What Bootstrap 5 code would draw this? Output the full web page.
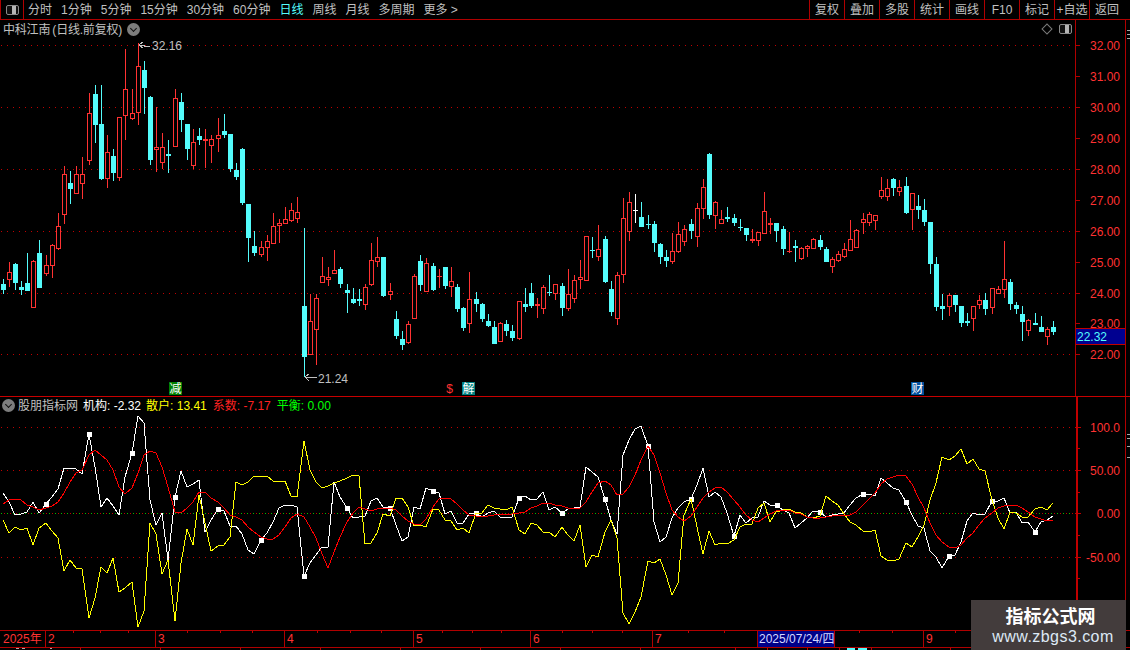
<!DOCTYPE html>
<html lang="zh">
<head>
<meta charset="utf-8">
<title>中科江南 日线</title>
<link href="https://cdn.jsdelivr.net/npm/bootstrap@5.3.0/dist/css/bootstrap.min.css" rel="stylesheet">
<style>
html,body{height:650px;overflow:hidden;background:#000}
body{font:12px/1 "Liberation Sans","Noto Sans CJK SC",sans-serif;color:#c0c0c0}
svg{display:block;shape-rendering:crispEdges}
svg text{font:12px "Liberation Sans","Noto Sans CJK SC",sans-serif;dominant-baseline:central;shape-rendering:auto}
svg polyline{stroke-width:1;fill:none}
.term{width:1130px;height:650px}
.toolbar{height:20px;border-bottom:1px solid #b00000}
.toggle-box{width:24px;height:19px;border-left:1px solid #b00000;border-right:1px solid #b00000}
.panel-glyph{width:13px;height:10px;border:1px solid #8a8a8a;border-radius:2px;background:linear-gradient(90deg,#111 0 50%,#b5b5b5 50% 85%,#111 85%)}
.periods{gap:9px;margin-left:4px}
.periods a,.tool-btn{color:#c0c0c0;text-decoration:none;white-space:nowrap}
.periods a.on{color:#54fcfc}
.tool-btn{width:35px;height:19px;border-left:1px solid #b00000;font-size:12px}
.tool-end{margin-right:6px}
.pane-a{height:377px;border-bottom:1px solid #c80000}
.pane-b{height:233px}
.title-a{left:3px;top:3px;gap:5px;letter-spacing:-.2px;word-spacing:-1px}
.title-b{left:2px;top:2px}
.title-b span+span{margin-left:6px}
.title-b span.lab{margin-left:3px}
.title-b span.val-w,.title-b span.val-y{margin-left:5px}
.circle-btn{width:13px;height:13px;border-radius:50%;background:#7d7d7d}
.circle-btn::after{content:"";width:5px;height:5px;margin-top:-3px;border-right:1px solid #111;border-bottom:1px solid #111;transform:rotate(45deg)}
.val-w{color:#fff}.val-y{color:#ff0}.val-r{color:#f22}.val-g{color:#0f0}
.tools-a{right:58px;top:4px;gap:8px}
.diamond{width:8px;height:8px;border:1px solid #7a7a7a;transform:rotate(45deg)}
.dates{height:18px;border-top:1px solid #b00000;border-bottom:1px solid #b00000;color:#ff3232}
.dates>div{padding:2px 0 0 2px;border-left:1px solid #b00000;white-space:nowrap;height:16px}
.dates>div:first-child{border-left:0;padding-left:3px;width:45px}
.dates>div:nth-child(2){width:110px}
.dates>div:nth-child(3),.dates>div:nth-child(4){width:129px}
.dates>div:nth-child(5){width:117px}
.dates>div:nth-child(6){width:122px}
.dates>div:nth-child(7){width:105px}
.dates>div:nth-child(9){width:88px}
.dates>div.date-cur{width:78px;background:#000088;color:#d4d8ff;border-right:1px solid #b00000;padding-left:1px}
.dates>div.date-cur+div{border-left:0}
.tick-row{left:0;top:0}
.foot-row{height:2px}
.mark-box{width:155px;height:50px;right:4px;bottom:0;padding-left:4px;background:#433c3c;color:#fff}
.mark-name{font:bold 18px "Noto Sans CJK SC",sans-serif;margin-bottom:4px;line-height:20px}
.mark-url{font-size:16px;letter-spacing:.45px;color:#dde9f5;line-height:16px;margin-left:5px}
</style>
</head>
<body class="bg-black">
<div class="term d-flex flex-column position-relative overflow-hidden">

  <nav class="toolbar d-flex align-items-center">
    <div class="toggle-box d-flex align-items-center justify-content-center"><span class="panel-glyph d-block"></span></div>
    <div class="periods d-flex">
      <a href="#">分时</a><a href="#">1分钟</a><a href="#">5分钟</a><a href="#">15分钟</a><a href="#">30分钟</a><a href="#">60分钟</a><a href="#" class="on">日线</a><a href="#">周线</a><a href="#">月线</a><a href="#">多周期</a><a href="#">更多 &gt;</a>
    </div>
    <div class="ms-auto d-flex tool-end">
      <a href="#" class="tool-btn d-flex align-items-center justify-content-center">复权</a>
      <a href="#" class="tool-btn d-flex align-items-center justify-content-center">叠加</a>
      <a href="#" class="tool-btn d-flex align-items-center justify-content-center">多股</a>
      <a href="#" class="tool-btn d-flex align-items-center justify-content-center">统计</a>
      <a href="#" class="tool-btn d-flex align-items-center justify-content-center">画线</a>
      <a href="#" class="tool-btn d-flex align-items-center justify-content-center">F10</a>
      <a href="#" class="tool-btn d-flex align-items-center justify-content-center">标记</a>
      <a href="#" class="tool-btn d-flex align-items-center justify-content-center">+自选</a>
      <a href="#" class="tool-btn d-flex align-items-center justify-content-center">返回</a>
    </div>
  </nav>

  <section class="pane-a d-flex position-relative">
    <svg id="plotA" width="1075" height="376" viewBox="0 20 1075 376"></svg>
    <svg id="axisA" width="55" height="376" viewBox="1075 20 55 376"></svg>
    <div class="title-a position-absolute d-flex align-items-center">
      <span>中科江南 (日线.前复权)</span><span class="circle-btn d-flex align-items-center justify-content-center"></span>
    </div>
    <div class="tools-a position-absolute d-flex align-items-center">
      <span class="diamond d-block"></span><span class="panel-glyph d-block"></span>
    </div>
  </section>

  <section class="pane-b d-flex position-relative">
    <svg id="plotB" width="1075" height="233" viewBox="0 397 1075 233">
      <polyline stroke="#fff" points="3,493 9,502 15,515 21,514 27,512 33,502 39,513 46,504 52,497 58,489 64,468 70,468 76,469 82,474 89,434 95,467 101,507 107,498 113,506 119,515 125,477 132,453 138,416 144,423 150,500 156,525 162,513 168,560 175,497 181,471 187,487 193,484 199,480 205,532 211,520 218,509 224,511 230,526 236,526 242,534 248,550 254,554 261,540 267,533 273,522 279,508 285,505 291,505 297,507 304,576 310,563 316,555 322,547 328,547 334,482 340,497 347,508 353,518 359,517 365,516 371,501 377,498 383,507 390,508 396,525 402,541 408,537 414,507 420,509 426,488 433,491 439,493 445,514 451,511 457,523 463,523 469,514 476,513 482,517 488,513 494,511 500,517 506,518 512,517 519,498 525,496 531,500 537,499 543,492 549,510 555,507 562,513 568,509 574,508 580,507 586,467 592,472 598,477 605,499 611,520 617,534 623,455 629,440 635,429 641,426 648,446 654,522 660,542 666,537 672,518 678,508 684,502 691,499 697,485 703,468 709,497 715,492 721,497 727,513 734,536 740,515 746,523 752,518 758,517 764,501 770,505 776,505 783,510 789,513 795,528 801,523 807,518 813,511 820,512 826,517 832,515 838,514 844,513 850,505 856,498 863,494 869,494 875,496 881,478 887,483 893,488 899,490 906,502 912,515 918,526 924,528 930,551 936,557 942,568 949,556 955,555 961,542 967,521 973,513 979,515 985,514 992,501 998,501 1004,498 1010,513 1016,512 1022,523 1028,522 1035,532 1041,522 1047,520 1053,516"/>
      <g id="marks" fill="#fff"></g>
      <polyline stroke="#ff0" points="3,520 9,533 15,527 21,530 27,528 33,545 39,528 46,523 52,531 58,538 64,571 70,560 76,568 82,569 89,618 95,598 101,567 107,573 113,558 119,592 125,588 132,582 138,627 144,611 150,523 156,534 162,574 168,560 175,621 181,563 187,529 193,545 199,495 205,523 211,551 218,546 224,545 230,537 236,482 242,485 248,482 254,476 261,476 267,476 273,481 279,481 285,481 291,496 297,497 304,441 310,470 316,482 322,488 328,486 334,483 340,481 347,478 353,475 359,476 365,544 371,543 377,533 383,514 390,516 396,498 402,498 408,507 414,526 420,525 426,527 433,509 439,510 445,520 451,521 457,530 463,528 469,533 476,513 482,513 488,505 494,508 500,509 506,510 512,507 519,530 525,534 531,523 537,525 543,532 549,532 555,537 562,527 568,535 574,541 580,525 586,567 592,555 598,557 605,532 611,520 617,538 623,613 629,624 635,612 641,597 648,561 654,563 660,559 666,575 672,595 678,583 684,515 691,499 697,527 703,554 709,531 715,545 721,543 727,544 734,540 740,527 746,524 752,524 758,508 764,503 770,522 776,512 783,510 789,509 795,512 801,513 807,517 813,518 820,516 826,496 832,501 838,505 844,514 850,522 856,525 863,531 869,532 875,530 881,556 887,560 893,561 899,559 906,543 912,547 918,537 924,525 930,500 936,483 942,457 949,460 955,456 961,449 967,464 973,459 979,469 985,471 992,500 998,518 1004,529 1010,512 1016,513 1022,517 1028,517 1035,509 1041,507 1047,510 1053,503"/>
      <polyline stroke="#f00" points="3,504 9,500 15,499 21,500 27,505 33,507 39,510 46,508 52,506 58,502 64,493 70,482 76,473 82,470 89,455 95,450 101,455 107,460 113,470 119,487 125,494 132,488 138,473 144,455 150,451 156,453 162,467 168,487 175,512 181,513 187,508 193,502 199,492 205,492 211,498 218,502 224,508 230,515 236,517 242,520 248,527 254,532 261,537 267,539 273,539 279,535 285,527 291,518 297,514 304,517 310,527 316,538 322,554 328,568 334,552 340,537 347,522 353,513 359,507 365,509 371,511 377,509 383,508 390,508 396,510 402,516 408,521 414,524 420,525 426,519 433,507 439,499 445,498 451,499 457,504 463,510 469,515 476,516 482,517 488,516 494,515 500,514 506,514 512,514 519,513 525,512 531,508 537,506 543,503 549,503 555,505 562,506 568,508 574,509 580,508 586,502 592,492 598,483 605,481 611,485 617,495 623,494 629,487 635,475 641,460 648,446 654,455 660,473 666,493 672,510 678,517 684,521 691,516 697,507 703,498 709,492 715,488 721,487 727,492 734,500 740,507 746,515 752,520 758,522 764,518 770,514 776,511 783,510 789,510 795,513 801,514 807,517 813,518 820,518 826,517 832,516 838,515 844,515 850,515 856,512 863,505 869,499 875,493 881,484 887,479 893,477 899,475 906,476 912,484 918,497 924,508 930,523 936,535 942,542 949,547 955,548 961,545 967,538 973,533 979,525 985,518 992,513 998,508 1004,506 1010,505 1016,505 1022,508 1028,512 1035,517 1041,519 1047,521 1053,520"/>
    </svg>
    <svg id="axisB" width="55" height="233" viewBox="1075 397 55 233"></svg>
    <div class="title-b position-absolute d-flex align-items-center">
      <span class="circle-btn d-flex align-items-center justify-content-center"></span>
      <span class="lab">股朋指标网</span>
      <span class="val-w">机构: -2.32</span>
      <span class="val-y">散户: 13.41</span>
      <span class="val-r">系数: -7.17</span>
      <span class="val-g">平衡: 0.00</span>
    </div>
  </section>

  <div class="dates d-flex position-relative">
    <div>2025年</div><div>2</div><div>3</div><div>4</div><div>5</div><div>6</div><div>7</div><div class="date-cur">2025/07/24/四</div><div></div><div>9</div>
    <svg id="ticks" class="tick-row position-absolute" width="1130" height="3"></svg>
  </div>
  <svg id="foot" class="foot-row" width="1130" height="2"></svg>

  <div class="mark-box position-absolute d-flex flex-column align-items-center justify-content-center">
    <div class="mark-name">指标公式网</div>
    <div class="mark-url">www.zbgs3.com</div>
  </div>
</div>

<script src="https://cdn.jsdelivr.net/npm/bootstrap@5.3.0/dist/js/bootstrap.bundle.min.js"></script>
<script>
var R='#ff3232',C='#54fcfc',DOT='#c00000',AX='#b00000';
var candles="3,279,284,290,294,c;9,262,272,280,287,r;15,263,264,283,290,c;21,281,287,290,295,c;27,253,283,291,291,c;33,260,261,308,308,r;39,240,253,288,288,c;46,255,265,274,276,r;52,244,245,266,278,r;58,213,226,249,250,r;64,166,174,215,224,r;70,171,183,189,204,c;76,166,174,194,194,r;82,157,174,184,199,r;89,93,113,161,165,r;95,85,94,125,143,c;101,85,124,179,180,c;107,135,152,179,188,r;113,149,156,173,181,c;119,117,117,178,181,r;125,49,89,116,140,r;132,89,113,119,120,r;138,43,66,113,125,r;144,61,70,88,114,c;150,96,97,160,165,c;156,107,147,150,172,r;162,133,147,163,169,r;168,140,154,156,173,c;175,89,98,147,147,r;181,93,102,120,132,c;187,124,124,149,160,c;193,129,142,166,169,r;199,128,136,140,145,c;205,129,139,141,168,r;211,135,139,146,163,r;218,118,135,139,152,r;224,114,131,135,138,c;230,134,134,169,172,c;236,163,170,177,180,c;242,148,149,203,205,c;248,204,204,238,262,c;254,231,246,253,256,c;261,241,247,255,257,r;267,235,241,248,261,r;273,213,226,244,244,r;279,219,223,226,243,r;285,207,219,224,224,r;291,203,210,221,222,r;297,197,212,219,223,r;304,228,306,357,377,c;310,294,321,355,355,r;316,294,298,330,365,r;322,257,276,283,283,r;328,267,277,280,286,r;334,250,270,274,274,r;340,267,269,284,288,c;347,284,290,293,313,c;353,288,299,303,304,c;359,289,299,301,306,c;365,284,287,305,310,r;371,243,260,285,286,r;377,237,257,262,267,r;383,257,257,296,297,c;390,283,291,295,300,r;396,311,319,336,339,c;402,331,339,345,350,c;408,321,324,343,344,r;414,274,276,319,319,r;420,255,261,285,291,c;426,258,263,292,292,r;433,263,266,290,291,c;439,269,276,277,288,r;445,267,267,286,289,c;451,267,281,287,297,r;457,284,287,309,312,c;463,307,308,328,331,c;469,272,299,324,333,r;476,292,299,304,312,c;482,303,304,319,322,c;488,314,321,326,327,c;494,321,327,344,344,c;500,322,323,342,342,r;506,320,324,331,336,c;512,325,331,338,341,c;519,301,301,339,340,r;525,288,304,307,312,c;531,283,293,306,308,c;537,298,304,306,318,r;543,285,287,309,314,r;549,275,292,293,296,c;555,284,284,294,300,r;562,283,286,308,316,c;568,269,294,309,311,r;574,275,280,299,303,r;580,260,277,280,289,r;586,236,236,281,281,r;592,237,250,251,258,c;598,225,249,257,261,r;605,236,239,282,283,c;611,281,289,312,316,c;617,272,275,319,325,r;623,198,218,275,283,r;629,192,202,232,241,r;635,194,210,211,223,w;641,202,217,227,227,c;648,215,224,225,229,c;654,221,224,243,252,c;660,243,244,257,264,c;666,250,257,261,267,c;672,233,251,262,264,r;678,222,234,252,253,r;684,225,229,242,246,r;691,219,224,231,239,c;697,203,208,237,247,r;703,179,187,209,219,r;709,153,154,215,219,c;715,201,202,216,229,r;721,210,219,224,224,r;727,207,217,219,222,c;734,214,218,223,226,c;740,219,227,228,231,c;746,228,228,235,241,c;752,229,239,241,243,r;758,232,232,241,246,r;764,192,211,234,234,r;770,218,223,225,234,r;776,223,223,231,242,c;783,226,229,249,255,c;789,232,251,252,253,r;795,240,246,248,262,c;801,247,248,259,260,r;807,245,246,249,257,r;813,238,239,249,249,r;820,235,240,247,250,c;826,247,249,262,262,c;832,257,259,267,273,r;838,251,254,261,262,r;844,243,249,257,258,r;850,220,239,251,251,r;856,229,230,248,248,r;863,213,219,223,234,r;869,212,214,223,226,r;875,215,215,221,230,r;881,177,190,197,199,r;887,179,188,197,201,r;893,178,179,188,196,c;899,180,187,192,196,r;906,177,186,213,214,c;912,193,193,210,230,r;918,195,206,210,219,c;924,199,210,222,226,c;930,222,222,264,274,c;936,257,264,307,311,c;942,294,306,309,320,c;949,293,295,307,316,r;955,295,295,305,312,c;961,306,306,323,327,c;967,313,321,323,326,c;973,306,306,319,331,r;979,295,300,305,309,r;985,293,300,309,315,c;992,288,288,308,314,r;998,286,289,294,294,r;1004,241,279,290,298,r;1010,279,282,304,310,c;1016,302,305,309,314,c;1022,306,314,322,341,c;1028,319,320,331,336,r;1035,313,323,325,325,c;1041,316,327,332,332,c;1047,327,329,337,345,r;1053,321,327,332,335,c";
function rect(x,y,w,h,f,s){return '<rect x="'+x+'" y="'+y+'" width="'+w+'" height="'+h+'" fill="'+f+'"'+(s?' stroke="'+s+'"':'')+'/>';}
function line(a,b,c,d,s){return '<line x1="'+a+'" y1="'+b+'" x2="'+c+'" y2="'+d+'" stroke="'+s+'"/>';}
function text(x,y,t,f,a,w){return '<text x="'+x+'" y="'+y+'" fill="'+f+'"'+(a?' text-anchor="'+a+'"':'')+(w?' font-weight="bold"':'')+'>'+t+'</text>';}
function dots(y,col,start){var s='',x;for(x=start;x<1075;x+=6)s+=rect(x,y,1,1,col);return s;}

/* price pane */
var a='';
[45,107,169,231,293,354].forEach(function(y){a+=dots(y,DOT,1);});
candles.split(';').forEach(function(r){
  var p=r.split(','),x=+p[0],h=+p[1],t=+p[2],b=+p[3],l=+p[4],k=p[5];
  var col=k=='r'?R:k=='c'?C:'#fff';
  a+=rect(x,h,1,l-h,col);
  if(k=='r'&&b-t>2) a+=rect(x-1.5,t+.5,4,b-t-1,'#000',col);
  else a+=rect(x-2,t,5,Math.max(b-t,1),col);
});
a+=line(139,45,150,47,'#c0c0c0')+line(139,45,143,42,'#c0c0c0')+line(139,45,143,48,'#c0c0c0')+text(152,46,'32.16','#c0c0c0');
a+=line(305,377.5,317,377.5,'#c0c0c0')+line(305,377,309,374,'#c0c0c0')+line(305,377,309,381,'#c0c0c0')+text(318,379,'21.24','#c0c0c0');
a+=rect(169,382,13,13,'#008000')+text(175.5,388.5,'减','#fff','middle');
a+=text(449.5,389,'$',R,'middle',1);
a+=rect(462,382,13,13,'#008080')+text(468.5,388.5,'解','#fff','middle');
a+=rect(911,382,13,13,'#00509e')+text(917.5,388.5,'财','#fff','middle');
document.getElementById('plotA').innerHTML=a;

var ax=line(1075.5,20,1075.5,396,AX)+line(1125.5,20,1125.5,396,AX);
[['32.00',45],['31.00',76],['30.00',107],['29.00',138],['28.00',169],['27.00',200],['26.00',231],['25.00',262],['24.00',293],['23.00',323],['22.00',354]].forEach(function(v){
  ax+=line(1075,v[1]+.5,1080,v[1]+.5,AX)+text(1120,v[1]+.5,v[0],R,'end');
});
ax+=rect(1076,329,49,15,'#000090')+line(1076,328.5,1125,328.5,'#c00000')+line(1076,344.5,1125,344.5,'#c00000')+text(1077,337,'22.32',C);
[30,34,38].forEach(function(y){ax+=line(1127,y,1130,y,'#a8a8a8');});
document.getElementById('axisA').innerHTML=ax;

/* indicator pane */
var plotB=document.getElementById('plotB'),g='';
[427,470,557].forEach(function(y){g+=dots(y,DOT,1);});
g+=dots(513,'#00c000',1)+dots(513,DOT,4);
plotB.insertAdjacentHTML('afterbegin',g);
var m='';
[[46,504],[89,434],[132,453],[175,497],[218,509],[261,540],[304,576],[347,508],[390,508],[433,491],[476,513],[519,498],[562,513],[605,499],[648,446],[691,499],[734,536],[777,505],[820,512],[863,494],[906,502],[949,556],[992,501],[1035,532]].forEach(function(p){m+=rect(p[0]-2,p[1]-2,5,5,'#fff');});
document.getElementById('marks').innerHTML=m;

var bx=line(1076,397,1076,630,'#c00000')+line(1077,397,1077,630,'#c00000')+line(1125.5,397,1125.5,600,AX);
[['100.0',427],['50.00',470],['0.00',513],['-50.00',557]].forEach(function(v){
  bx+=line(1075,v[1]+.5,1081,v[1]+.5,'#c00000')+text(1120,v[1]+.5,v[0],R,'end');
});
[448,492,535,578].forEach(function(y){bx+=line(1077,y+.5,1080,y+.5,'#c00000');});
[434,438,446,457].forEach(function(y){bx+=line(1127,y,1130,y,'#a8a8a8');});
document.getElementById('axisB').innerHTML=bx;

/* date ticks */
var t='';
[73,100,128,187,220,252,317,350,381,442,472,501,562,592,622,688,724,859,892,955,985].forEach(function(x){t+=rect(x,0,1,2,'#c00000');});
document.getElementById('ticks').innerHTML=t;
var f='';
[80,160,240,320,400,480,560,640,735,767,807,839,871,950].forEach(function(x){f+=rect(x,0,1,2,'#c00000');});
f+=rect(16,0,3,1,'#aaa')+rect(22,0,3,1,'#aaa')+rect(50,0,2,1,'#aaa')+rect(847,0,8,2,C)+rect(858,0,9,2,C);
document.getElementById('foot').innerHTML=f;
</script>
</body>
</html>
